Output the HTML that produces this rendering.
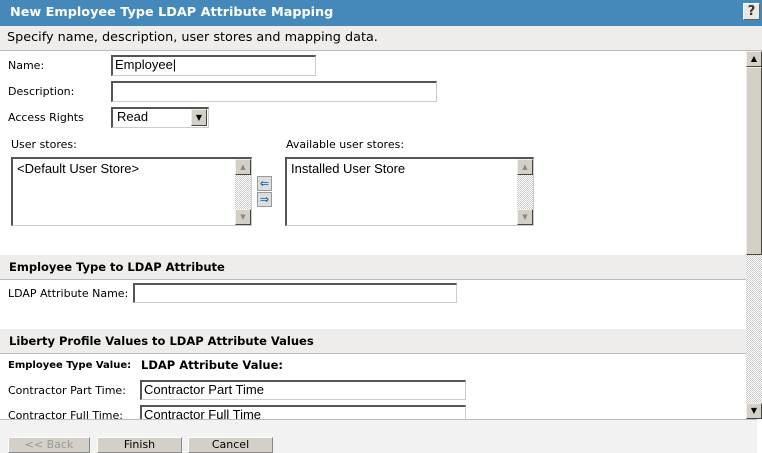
<!DOCTYPE html>
<html><head><style>
*{margin:0;padding:0;box-sizing:border-box}
body{width:762px;height:453px;position:relative;overflow:hidden;background:#fff;font-family:"DejaVu Sans",sans-serif;font-size:11px;color:#000}
.a{position:absolute}
.title{left:0;top:0;width:762px;height:26px;background:#4589ba;color:#fff;font-weight:bold;font-size:12.8px;line-height:26px;padding-left:10px}
.help{left:743px;top:3px;width:17px;height:17px;background:#e8e8e4;border:1px solid #fff;border-right-color:#666;border-bottom-color:#666;color:#333;font-weight:bold;font-size:13px;text-align:center;line-height:15px}
.sub{left:0;top:26px;width:762px;height:25px;background:#eeedeb;border-bottom:1px solid #bbb;font-size:12.8px;line-height:24px;padding-left:7px}
.inp{border:1px solid #ccc;border-top:2px solid #555;border-left:2px solid #555;background:#fff;font-family:"Liberation Sans",sans-serif;font-size:13px;line-height:16px;padding-left:2px;white-space:nowrap;overflow:hidden}
.sec{left:0;width:746px;height:25px;background:#eeedeb;border-bottom:1px solid #bbb;font-weight:bold;font-size:11.5px;line-height:24px;padding-left:9px}
.sb{background:#d4d0c8;border:1px solid #eee;border-right-color:#444;border-bottom-color:#444}
.chk{background-image:repeating-conic-gradient(#ccc 0 25%,#fff 0 50%);background-size:2px 2px}
.fb{height:16px;background:#d4d0c8;border:1px solid #888;border-top-color:#fff;border-left-color:#fff;font-size:11px;text-align:center;line-height:14px}
</style></head><body>
<div class="a title">New Employee Type LDAP Attribute Mapping</div>
<div class="a help">?</div>
<div class="a sub">Specify name, description, user stores and mapping data.</div>

<div class="a" style="left:8px;top:59px">Name:</div>
<div class="a inp" style="left:111px;top:55px;width:205px;height:21px">Employee|</div>
<div class="a" style="left:8px;top:85px">Description:</div>
<div class="a inp" style="left:111px;top:81px;width:326px;height:21px"></div>
<div class="a" style="left:8px;top:111px">Access Rights</div>
<div class="a inp" style="left:111px;top:107px;width:98px;height:21px;padding-left:4px">Read</div>
<div class="a sb" style="left:191px;top:109px;width:16px;height:17px;font-size:8px;text-align:center;line-height:15px">▼</div>

<div class="a" style="left:11px;top:138px">User stores:</div>
<div class="a inp" style="left:11px;top:157px;width:241px;height:69px;padding-left:4px;padding-top:2px">&lt;Default User Store&gt;</div>
<div class="a chk" style="left:235px;top:159px;width:16px;height:66px"></div>
<div class="a sb" style="left:235px;top:159px;width:16px;height:16px;font-size:7px;color:#888;text-align:center;line-height:14px">▲</div>
<div class="a sb" style="left:235px;top:209px;width:16px;height:16px;font-size:7px;color:#888;text-align:center;line-height:14px">▼</div>

<div class="a" style="left:257px;top:176px;width:15px;height:15px;background:#ddd;border:1px solid #999;color:#2a6bb5;font-size:11px;font-weight:bold;text-align:center;line-height:13px">⇐</div>
<div class="a" style="left:257px;top:192px;width:15px;height:15px;background:#ddd;border:1px solid #999;color:#2a6bb5;font-size:11px;font-weight:bold;text-align:center;line-height:13px">⇒</div>

<div class="a" style="left:286px;top:138px">Available user stores:</div>
<div class="a inp" style="left:285px;top:157px;width:249px;height:69px;padding-left:4px;padding-top:2px">Installed User Store</div>
<div class="a chk" style="left:517px;top:159px;width:16px;height:66px"></div>
<div class="a sb" style="left:517px;top:159px;width:16px;height:16px;font-size:7px;color:#888;text-align:center;line-height:14px">▲</div>
<div class="a sb" style="left:517px;top:209px;width:16px;height:16px;font-size:7px;color:#888;text-align:center;line-height:14px">▼</div>

<div class="a sec" style="top:255px">Employee Type to LDAP Attribute</div>
<div class="a" style="left:8px;top:287px">LDAP Attribute Name:</div>
<div class="a inp" style="left:133px;top:283px;width:324px;height:20px"></div>

<div class="a sec" style="top:329px">Liberty Profile Values to LDAP Attribute Values</div>
<div class="a" style="left:8px;top:360px;font-weight:bold;font-size:10px">Employee Type Value:</div>
<div class="a" style="left:141px;top:358px;font-weight:bold;font-size:11.5px">LDAP Attribute Value:</div>
<div class="a" style="left:8px;top:384px">Contractor Part Time:</div>
<div class="a inp" style="left:140px;top:380px;width:326px;height:20px">Contractor Part Time</div>
<div class="a" style="left:8px;top:409px">Contractor Full Time:</div>
<div class="a inp" style="left:140px;top:405px;width:326px;height:20px">Contractor Full Time</div>

<div class="a chk" style="left:746px;top:51px;width:16px;height:368px"></div>
<div class="a sb" style="left:746px;top:51px;width:16px;height:16px;font-size:8px;text-align:center;line-height:14px">▲</div>
<div class="a sb" style="left:746px;top:67px;width:16px;height:188px"></div>
<div class="a sb" style="left:746px;top:403px;width:16px;height:16px;font-size:8px;text-align:center;line-height:14px">▼</div>

<div class="a" style="left:0;top:419px;width:757px;height:34px;background:#f2f2f2;border-top:1px solid #bbb"></div>
<div class="a fb" style="left:8px;top:437px;width:82px;color:#999">&lt;&lt; Back</div>
<div class="a fb" style="left:97px;top:437px;width:85px">Finish</div>
<div class="a fb" style="left:188px;top:437px;width:85px">Cancel</div>
</body></html>
